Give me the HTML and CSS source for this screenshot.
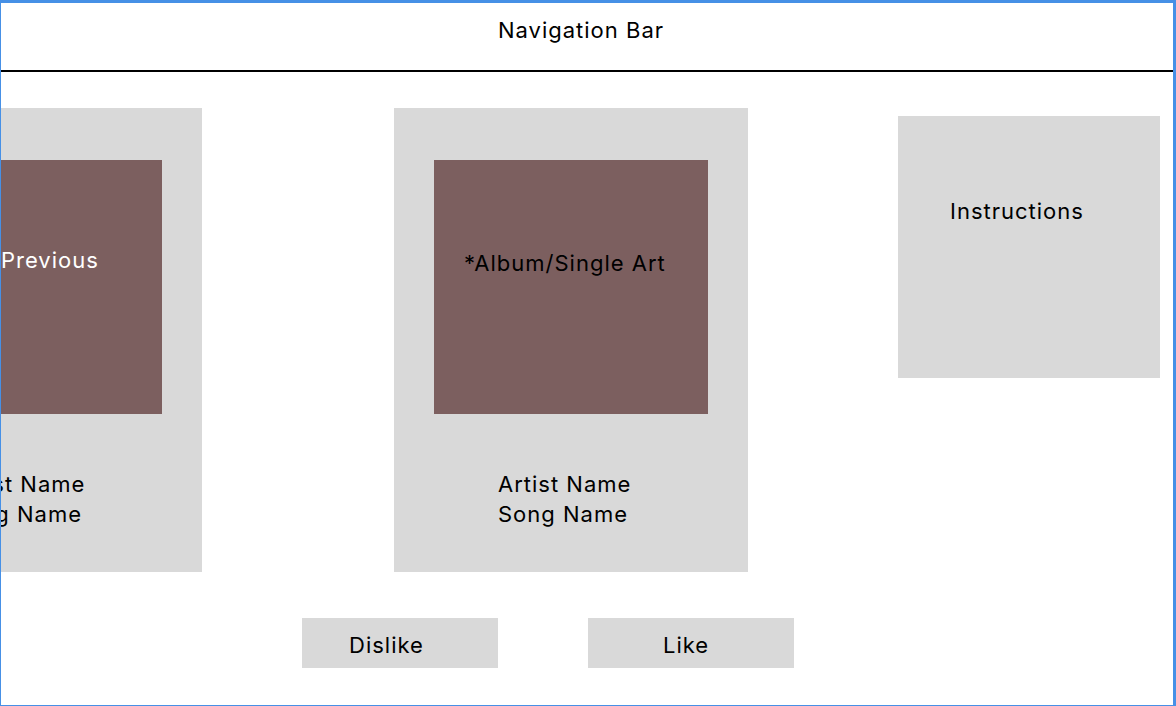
FILE: index.html
```html
<!DOCTYPE html>
<html>
<head>
<meta charset="utf-8">
<link rel="stylesheet" href="styles.css">
</head>
<body>
<div class="frame">
  <header class="navbar">Navigation Bar</header>
  <main class="content">
    <section class="cards">
      <div class="card card-prev">
        <div class="art art-prev">Previous</div>
        <div class="meta">Artist Name<br>Song Name</div>
      </div>
      <div class="card card-current">
        <div class="art art-current">*Album/Single Art</div>
        <div class="meta">Artist Name<br>Song Name</div>
      </div>
      <div class="instructions">Instructions</div>
    </section>
    <section class="actions">
      <button class="btn btn-dislike">Dislike</button>
      <button class="btn btn-like">Like</button>
    </section>
  </main>
</div>
</body>
</html>
```

FILE: styles.css
```css
html, body {
  margin: 0;
  padding: 0;
  background: #ffffff;
}

.frame {
  width: 1176px;
  height: 706px;
  box-sizing: border-box;
  border-style: solid;
  border-color: #4690e6;
  border-width: 3px 3px 1px 1px;
  overflow: hidden;
  font-family: "Inter", "Liberation Sans", sans-serif;
  font-size: 22px;
  letter-spacing: 1px;
  color: #000;
  display: flex;
  flex-direction: column;
}

.navbar {
  height: 69px;
  flex: none;
  box-sizing: border-box;
  border-bottom: 2px solid #000;
  display: flex;
  justify-content: center;
  padding: 15px 12px 0 0;
  line-height: 25px;
}

.content {
  flex: 1;
  display: flex;
  flex-direction: column;
}

.cards {
  display: flex;
  align-items: flex-start;
  margin-top: 36px;
  margin-left: -153px;
}

.card {
  width: 354px;
  height: 464px;
  flex: none;
  box-sizing: border-box;
  background: #d9d9d9;
  padding: 52px 40px 0 40px;
}

.card-current {
  margin-left: 192px;
}

.art {
  height: 254px;
  background: #7c5f5f;
  box-sizing: border-box;
  line-height: 25px;
  white-space: nowrap;
}

.art-prev {
  color: #ffffff;
  padding: 88px 0 0 113px;
}

.art-current {
  color: #000;
  padding: 91px 0 0 30px;
}

.meta {
  margin-top: 55px;
  padding-left: 64px;
  line-height: 30px;
  white-space: nowrap;
}

.instructions {
  width: 262px;
  height: 262px;
  flex: none;
  box-sizing: border-box;
  margin-left: 150px;
  margin-top: 8px;
  background: #d9d9d9;
  padding: 83px 0 0 52px;
  line-height: 25px;
}

.actions {
  display: flex;
  margin-top: 46px;
  margin-left: 301px;
  gap: 90px;
}

.btn {
  height: 50px;
  border: none;
  margin: 0;
  background: #d9d9d9;
  font: inherit;
  letter-spacing: inherit;
  color: #000;
  text-align: left;
  line-height: 25px;
  box-sizing: border-box;
  padding: 5px 0 0 0;
  display: block;
  cursor: pointer;
}

.btn-dislike {
  width: 196px;
  padding-left: 47px;
}

.btn-like {
  width: 206px;
  padding-left: 75px;
}
```
